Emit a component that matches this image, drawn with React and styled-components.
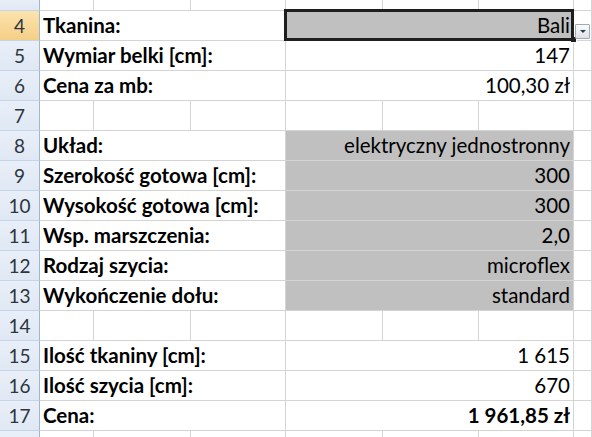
import React from 'react';
import styled, { createGlobalStyle, css } from 'styled-components';

const GlobalStyle = createGlobalStyle`
  html, body {
    margin: 0;
    padding: 0;
    background: #ffffff;
    overflow: hidden;
  }
`;

const GRID = '#d4d4d4';
const HEAD_LINE = '#9eb6ce';

const Sheet = styled.div`
  width: 592px;
  height: 437px;
  overflow: hidden;
  font-family: Lato, 'Liberation Sans', sans-serif;
  color: #000;
`;

const Row = styled.div`
  display: grid;
  grid-template-columns: 40px 54px 97px 95px 97px 96px 95px 1fr;
  height: ${(p) => p.$height || 30}px;
`;

const RowHead = styled.div`
  box-sizing: border-box;
  border-right: 1px solid ${HEAD_LINE};
  border-bottom: 1px solid #c5d5e8;
  background: ${(p) => (p.$active
    ? 'linear-gradient(#fbe3ae, #f6cf86)'
    : 'linear-gradient(#e9eff8, #dfe8f4)')};
  color: #2c3540;
  font-size: 19px;
  display: flex;
  align-items: flex-end;
  justify-content: center;
  padding-bottom: 3px;
  overflow: hidden;
`;

const Cell = styled.div`
  position: relative;
  box-sizing: border-box;
  grid-column: span ${(p) => p.$span || 1};
  border-right: 1px solid ${GRID};
  border-bottom: 1px solid ${GRID};
  background: ${(p) => (p.$fill ? '#c0c0c0' : '#ffffff')};
  font-size: 20.5px;
  font-weight: ${(p) => (p.$bold ? 700 : 400)};
  white-space: nowrap;
  display: flex;
  align-items: flex-end;
  justify-content: ${(p) => (p.$right ? 'flex-end' : 'flex-start')};
  padding: 0 3px 3px 3px;
  ${(p) => p.$selected && css`
    &::after {
      content: '';
      position: absolute;
      left: -2px;
      top: -2px;
      right: -1px;
      bottom: -1px;
      border: 3px solid #1e1e1e;
      pointer-events: none;
    }
  `}
`;

const FillHandle = styled.span`
  position: absolute;
  right: -4px;
  bottom: -3px;
  width: 5px;
  height: 5px;
  background: #1e1e1e;
  border: 1px solid #ffffff;
  border-width: 0 1px 1px 0;
  z-index: 2;
`;

const DropButton = styled.span`
  position: absolute;
  left: 1px;
  bottom: 1px;
  width: 15px;
  height: 15px;
  box-sizing: border-box;
  border: 1px solid #a3a9b2;
  border-radius: 1px;
  background: linear-gradient(#fbfbfb, #dde1e7);
  display: flex;
  align-items: center;
  justify-content: center;
  z-index: 3;

  &::before {
    content: '';
    border-left: 3px solid transparent;
    border-right: 3px solid transparent;
    border-top: 3px solid #2b3a4f;
  }
`;

const rows = [
  { n: 4, label: 'Tkanina:', value: 'Bali', fill: true, selected: true },
  { n: 5, label: 'Wymiar belki [cm]:', value: '147' },
  { n: 6, label: 'Cena za mb:', value: '100,30 zł' },
  { n: 7 },
  { n: 8, label: 'Układ:', value: 'elektryczny jednostronny', fill: true },
  { n: 9, label: 'Szerokość gotowa [cm]:', value: '300', fill: true },
  { n: 10, label: 'Wysokość gotowa [cm]:', value: '300', fill: true },
  { n: 11, label: 'Wsp. marszczenia:', value: '2,0', fill: true },
  { n: 12, label: 'Rodzaj szycia:', value: 'microflex', fill: true },
  { n: 13, label: 'Wykończenie dołu:', value: 'standard', fill: true },
  { n: 14 },
  { n: 15, label: 'Ilość tkaniny [cm]:', value: '1 615' },
  { n: 16, label: 'Ilość szycia [cm]:', value: '670' },
  { n: 17, label: 'Cena:', value: '1 961,85 zł', boldValue: true },
];

function EmptyCells() {
  return (
    <>
      <Cell />
      <Cell />
      <Cell />
      <Cell />
      <Cell />
      <Cell />
      <Cell />
    </>
  );
}

export default function App() {
  return (
    <Sheet>
      <GlobalStyle />
      <Row $height={11}>
        <RowHead />
        <EmptyCells />
      </Row>
      {rows.map((r) => (
        <Row key={r.n}>
          <RowHead $active={r.selected}>{r.n}</RowHead>
          {r.label === undefined ? (
            <EmptyCells />
          ) : (
            <>
              <Cell $span={3} $bold>{r.label}</Cell>
              <Cell $span={3} $right $fill={r.fill} $bold={r.boldValue} $selected={r.selected}>
                {r.value}
                {r.selected && <FillHandle />}
              </Cell>
              <Cell>{r.selected && <DropButton />}</Cell>
            </>
          )}
        </Row>
      ))}
      <Row>
        <RowHead />
        <EmptyCells />
      </Row>
    </Sheet>
  );
}
